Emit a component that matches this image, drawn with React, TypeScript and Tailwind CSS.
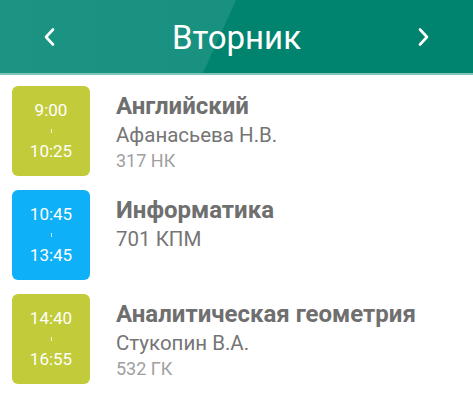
import React from "react";

const lessons = [
  { start: "9:00", end: "10:25", title: "Английский", teacher: "Афанасьева Н.В.", room: "317 НК", color: "bg-[#c2cb39]" },
  { start: "10:45", end: "13:45", title: "Информатика", teacher: "", room: "701 КПМ", color: "bg-[#0eb0f7]" },
  { start: "14:40", end: "16:55", title: "Аналитическая геометрия", teacher: "Стукопин В.А.", room: "532 ГК", color: "bg-[#c2cb39]" },
];

const Chevron = ({ dir }: { dir: "left" | "right" }) => (
  <svg width="14" height="20" viewBox="0 0 14 20" fill="none">
    <path
      d={dir === "left" ? "M11 2.5 L4 10 L11 17.5" : "M3 2.5 L10 10 L3 17.5"}
      stroke="white"
      strokeWidth="2.6"
      strokeLinecap="round"
      strokeLinejoin="round"
    />
  </svg>
);

const App = () => {
  return (
    <div className="w-[473px] h-[404px] bg-white font-['Roboto',sans-serif] overflow-hidden">
      <header className="relative h-[75px] bg-[#01846f] border-b-2 border-[#7fc5b9]">
        <div className="absolute inset-0 bg-gradient-to-r from-[#1c9484] to-[#138d7c] [clip-path:polygon(0_0,236px_0,203px_100%,0_100%)]" />
        <div className="relative h-full flex items-center justify-between pl-[42px] pr-[42px]">
          <Chevron dir="left" />
          <h1 className="text-[33px] text-white leading-none mt-[2px]">Вторник</h1>
          <Chevron dir="right" />
        </div>
      </header>
      <main className="flex flex-col gap-[14px] pt-[11px] pl-[12px]">
        {lessons.map((l, i) => (
          <div key={i} className="flex">
            <div className={`${l.color} w-[78px] h-[90px] rounded-[6px] flex flex-col items-center justify-center text-white text-[17px] leading-none shrink-0`}>
              <span>{l.start}</span>
              <span className="w-[1px] h-[4px] bg-white/80 my-[10px]" />
              <span>{l.end}</span>
            </div>
            <div className="ml-[26px] pt-[6px] flex flex-col">
              <h4 className="text-[24px] font-bold text-[#6f6f6f] leading-[28px] whitespace-nowrap">{l.title}</h4>
              {l.teacher ? (
                <>
                  <p className="text-[20.5px] text-[#757575] leading-[24px] mt-[3px]">{l.teacher}</p>
                  <p className="text-[18px] text-[#a0a0a0] leading-[20px] mt-[4px]">{l.room}</p>
                </>
              ) : (
                <p className="text-[20.5px] text-[#757575] leading-[24px] mt-[3px]">{l.room}</p>
              )}
            </div>
          </div>
        ))}
      </main>
    </div>
  );
};

export default App;
